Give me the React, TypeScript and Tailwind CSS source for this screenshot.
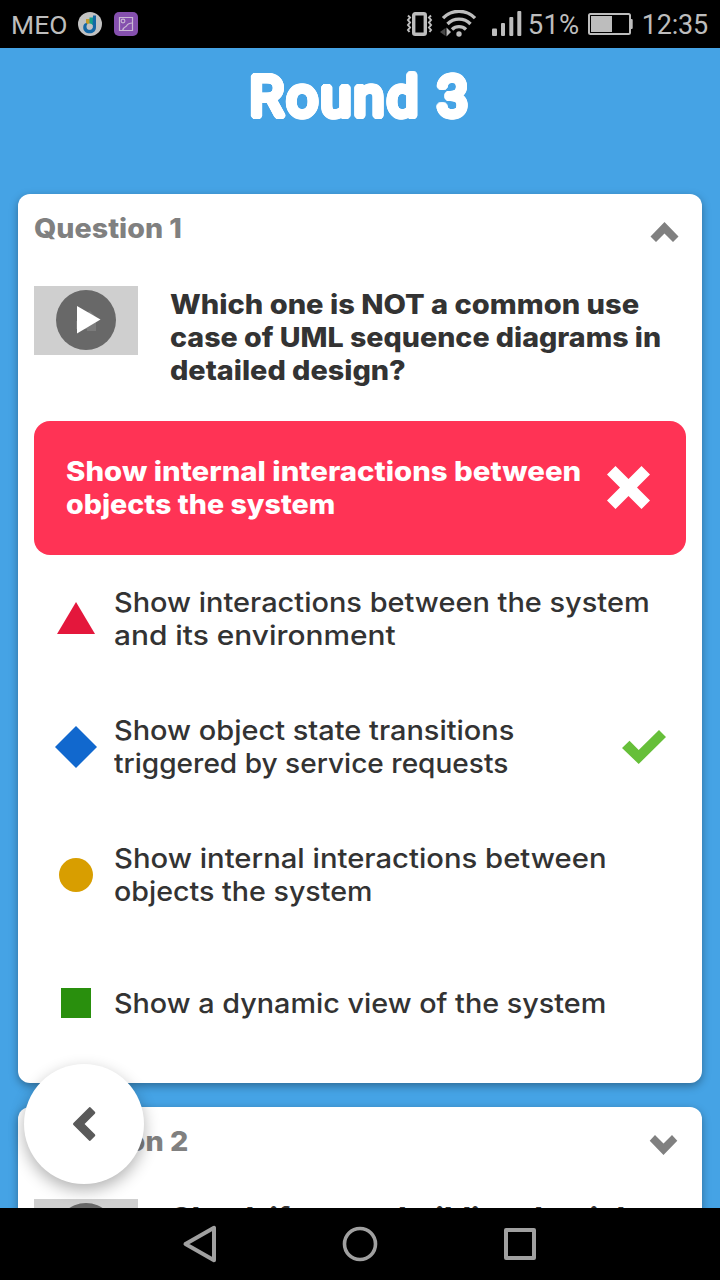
function StatusBar() {
  return (
    <header className="flex h-12 shrink-0 items-center bg-black font-[Roboto,sans-serif] text-[27px] leading-8 text-[#bdbdbd]">
      <span className="ml-[11px] mt-0.5 w-[67px] text-[26.5px] font-normal">MEO</span>
      <svg width="24" height="24" viewBox="0 0 24 24">
        <circle cx="12" cy="12" r="12" fill="#c2c2c2" />
        <path d="M8 7h4v5H8z" fill="#c39a2c" />
        <path d="M11.5 5.5h4V13h-4z" fill="#12a08c" />
        <path d="M15 3.5h3V15c0 4-2.6 6.3-6.4 6.3C8 21.300 5.200 19 5.200 15.500c0-2.500 1-4 3-4.500l2.500 2-1.200 3 2 1.500 3-1.500z" fill="#1467a5" />
        <circle cx="11.600" cy="14.700" r="3.100" fill="#c2c2c2" />
      </svg>
      <svg className="ml-3" width="24" height="24" viewBox="0 0 24 24" fill="none" stroke="#c9b8d4">
        <rect width="24" height="24" rx="5" fill="#8550ae" stroke="none" />
        <path d="M5.500 5.500h13v13h-13z" strokeWidth="1.200" />
        <circle cx="9" cy="9" r="1.900" strokeWidth="1.100" />
        <path d="M8.500 18.500c1-3 2-3.500 4-4.500 1-2 3-3 6-3" strokeWidth="1.200" />
      </svg>
      <div className="ml-auto flex items-center">
        <svg width="27" height="26" viewBox="0 0 27 26" fill="none" stroke="#bdbdbd">
          <rect x="7.700" y="2.700" width="11.600" height="20.600" rx="1.500" strokeWidth="3.400" />
          <path d="M2 4.500l2 2-2 2.500 2 2.500-2 2.500 2 2.500-2 2.500 1.500 2M25 4.500l-2 2 2 2.500-2 2.500 2 2.500-2 2.500 2 2.500-1.500 2" strokeWidth="2" />
        </svg>
        <svg className="ml-[7px]" width="38" height="28" viewBox="0 0 38 28" fill="none" stroke="#bdbdbd" strokeWidth="3.300">
          <path d="M3 8.200a22 22 0 0 1 32 0" />
          <path d="M7.500 14a16 16 0 0 1 23 0" />
          <path d="M12 19.500a10 10 0 0 1 14 0" />
          <circle cx="19" cy="24" r="2.700" fill="#bdbdbd" stroke="none" />
          <path d="M5.500 18v8L0 22z" fill="#484848" stroke="none" />
          <path d="M6.500 17.500l4.500 4.500-4.500 4.500z" fill="#bdbdbd" stroke="none" />
        </svg>
        <svg className="ml-[14px]" width="30" height="26" viewBox="0 0 30 26" fill="#bdbdbd">
          <rect y="17.500" width="5" height="7.500" rx="1" />
          <rect x="9" y="12" width="4" height="13" rx="1" />
          <rect x="17.300" y="6" width="4" height="19" rx="1" />
          <rect x="25.300" y="0" width="4" height="25" rx="1" />
        </svg>
        <span className="ml-[6px] mt-0.5 w-[51px] whitespace-nowrap text-[27.5px] tracking-[0.2px]">51%</span>
        <svg className="ml-[9px]" width="45" height="22" viewBox="0 0 45 22" fill="#bdbdbd">
          <rect x="1" y="1" width="41" height="20" rx="1.500" fill="none" stroke="#bdbdbd" strokeWidth="2" />
          <rect x="3" y="3" width="21" height="16" />
          <rect x="42" y="6" width="2.700" height="10" rx="1" />
        </svg>
        <span className="ml-[9px] mr-3 mt-0.5 whitespace-nowrap tracking-[-0.2px]">12:35</span>
      </div>
    </header>
  );
}

function PlayThumb() {
  return (
    <div className="h-[69px] w-[104px] shrink-0 bg-[#cfcfcf]">
      <svg width="104" height="69" viewBox="0 0 104 69">
        <circle cx="52" cy="34" r="30" fill="#686868" />
        <path d="M42 43v2h20V35H42z" fill="#7b7b7b" />
        <path d="M42 45h11v-2H42z" fill="#686868" />
        <path d="M47 30l9-5 6 6v4h-15z" fill="#7b7b7b" />
        <path d="M43 20v27.500l23.500-14z" fill="#fff" />
      </svg>
    </div>
  );
}

function ChevronUp() {
  return (
    <svg className="mt-2.5 mr-[7px]" width="30" height="20" viewBox="0 0 30 20">
      <path d="M15.500 0L29.500 14.500 24 20 15.500 11.500 7 20 1.500 14.500z" fill="#808080" />
    </svg>
  );
}

function ChevronDown() {
  return (
    <svg className="mt-2.5 mr-[7px]" width="30" height="20" viewBox="0 0 30 20">
      <path d="M14.500 20L.7 5.700 6 0l8.500 8.500L23 0l5.300 5.700z" fill="#808080" />
    </svg>
  );
}

const shapes = {
  triangle: <path d="M21 2l19 32H2z" fill="#e4173c" transform="translate(0 2)" />,
  diamond: <path d="M21 0l21 21-21 21L0 21z" fill="#1168ce" />,
  circle: <circle cx="21" cy="21" r="17" fill="#d89e00" />,
  square: <path d="M6 6h30v30H6z" fill="#298f0d" />,
};

type Line = { text: string; stretch: string };

function Lines({ lines }: { lines: Line[] }) {
  return (
    <>
      {lines.map((l) => (
        <span key={l.text} className={`block w-fit origin-left whitespace-nowrap ${l.stretch}`}>
          {l.text}
        </span>
      ))}
    </>
  );
}

const options: { shape: keyof typeof shapes; correct?: boolean; lines: Line[] }[] = [
  {
    shape: "triangle",
    lines: [
      { text: "Show interactions between the system", stretch: "scale-x-[1.072]" },
      { text: "and its environment", stretch: "scale-x-[1.106]" },
    ],
  },
  {
    shape: "diamond",
    correct: true,
    lines: [
      { text: "Show object state transitions", stretch: "scale-x-[1.072]" },
      { text: "triggered by service requests", stretch: "scale-x-[1.039]" },
    ],
  },
  {
    shape: "circle",
    lines: [
      { text: "Show internal interactions between", stretch: "scale-x-[1.083]" },
      { text: "objects the system", stretch: "scale-x-[1.06]" },
    ],
  },
  {
    shape: "square",
    lines: [{ text: "Show a dynamic view of the system", stretch: "scale-x-[1.065]" }],
  },
];

export default function App() {
  return (
    <div className="relative flex h-[1280px] w-[720px] flex-col overflow-hidden bg-[#45a3e5] font-[Inter,sans-serif] text-[27px] leading-[33px] text-[#333]">
      <StatusBar />
      <main className="flex min-h-0 flex-1 flex-col gap-6 overflow-hidden px-[18px]">
        <h1 className="-mb-6 h-[146px] shrink-0 pt-[15px] text-center font-[Roboto,sans-serif] text-[56px] leading-[68px] font-normal tracking-[2.3px] text-white [text-shadow:3px_0_#fff,2.77px_1.15px_#fff,2.12px_2.12px_#fff,1.15px_2.77px_#fff,0_3px_#fff,-1.15px_2.77px_#fff,-2.12px_2.12px_#fff,-2.77px_1.15px_#fff,-3px_0_#fff,-2.77px_-1.15px_#fff,-2.12px_-2.12px_#fff,-1.15px_-2.77px_#fff,0_-3px_#fff,1.15px_-2.77px_#fff,2.12px_-2.12px_#fff,2.77px_-1.15px_#fff]">
          Round 3
        </h1>
        <section className="h-[889px] shrink-0 rounded-xl bg-white px-4 pt-[18px] shadow-[0_3px_8px_rgba(0,0,0,0.35)]">
          <div className="flex justify-between">
            <h2 className="origin-left scale-x-[1.06] font-extrabold text-[#808080]">Question 1</h2>
            <ChevronUp />
          </div>
          <div className="mt-[41px] flex h-[135px] gap-8">
            <PlayThumb />
            <p className="pt-0.5 font-extrabold">
              <Lines
                lines={[
                  { text: "Which one is NOT a common use", stretch: "scale-x-[1.077]" },
                  { text: "case of UML sequence diagrams in", stretch: "scale-x-[1.06]" },
                  { text: "detailed design?", stretch: "scale-x-[1.067]" },
                ]}
              />
            </p>
          </div>
          <div className="flex h-[134px] items-center justify-between rounded-2xl bg-[#ff3355] pr-9 pl-8 font-extrabold text-white">
            <p>
              <Lines
                lines={[
                  { text: "Show internal interactions between", stretch: "scale-x-[1.088]" },
                  { text: "objects the system", stretch: "scale-x-[1.06]" },
                ]}
              />
            </p>
            <svg className="-mt-px shrink-0" width="43" height="43" viewBox="0 0 43 43">
              <path d="M0 8.500L8.500 0l13 13 13-13L43 8.500l-13 13 13 13-8.500 8.500-13-13-13 13L0 34.500l13-13z" fill="#fff" />
            </svg>
          </div>
          <ul className="pr-5 pl-[21px]">
            {options.map((o) => (
              <li key={o.shape} className="flex h-32 items-center font-medium">
                <svg className="shrink-0" width="42" height="42" viewBox="0 0 42 42">
                  {shapes[o.shape]}
                </svg>
                <p className="ml-[17px]">
                  <Lines lines={o.lines} />
                </p>
                {o.correct && (
                  <svg className="-mt-px ml-auto shrink-0" width="44" height="34" viewBox="0 0 44 34">
                    <path d="M0 18l7.500-7.300 9.200 9.300L37 0l7 7-27.300 27z" fill="#66bf39" />
                  </svg>
                )}
              </li>
            ))}
          </ul>
        </section>
        <section className="h-[320px] shrink-0 rounded-xl bg-white px-4 pt-[18px] shadow-[0_3px_8px_rgba(0,0,0,0.35)]">
          <div className="flex justify-between">
            <h2 className="origin-left scale-x-[1.065] font-extrabold text-[#808080]">Question 2</h2>
            <ChevronDown />
          </div>
          <div className="mt-[41px] flex gap-8">
            <PlayThumb />
            <p className="pt-0.5 font-extrabold">
              <Lines lines={[{ text: "Check if we are building the right", stretch: "scale-x-[1.088]" }]} />
            </p>
          </div>
        </section>
      </main>
      <button
        aria-label="Back"
        className="absolute top-[1064px] left-6 flex size-[120px] items-center justify-center rounded-full bg-white shadow-[0_6px_16px_rgba(0,0,0,0.3)]"
      >
        <svg width="24" height="36" viewBox="0 0 24 36">
          <path d="M2.500 18L17.800 2.700l4 4L10.500 18l11.300 11.300-4 4z" fill="#5a5a5a" stroke="#5a5a5a" strokeWidth="3" strokeLinejoin="round" />
        </svg>
      </button>
      <nav className="z-10 flex h-[72px] shrink-0 items-center justify-center gap-[120px] bg-black">
        <svg width="40" height="40" viewBox="0 0 40 40" fill="none" stroke="#a0a0a0" strokeWidth="4" strokeLinejoin="round">
          <path d="M5.500 20L34 3.800v32.400z" />
        </svg>
        <svg width="40" height="40" viewBox="0 0 40 40" fill="none" stroke="#a0a0a0" strokeWidth="3.600">
          <circle cx="20" cy="20" r="15.500" />
        </svg>
        <svg width="40" height="40" viewBox="0 0 40 40" fill="none" stroke="#a0a0a0" strokeWidth="4" strokeLinejoin="round">
          <path d="M6 6h28v28H6z" />
        </svg>
      </nav>
    </div>
  );
}
